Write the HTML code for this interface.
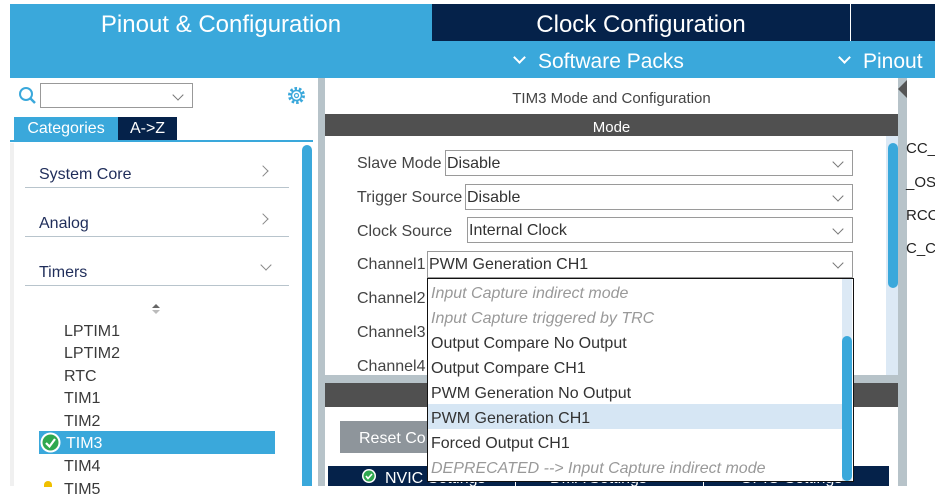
<!DOCTYPE html>
<html><head><style>
*{margin:0;padding:0;box-sizing:border-box}
body{width:935px;height:486px;overflow:hidden;background:#fff;font-family:"Liberation Sans",sans-serif;position:relative;color:#3a3a3a}
.a{position:absolute}
.t{position:absolute;white-space:nowrap}
.sel{position:absolute;border:1px solid #9a9a9a;background:#fff;height:26px;font-size:16px;line-height:26px;padding-left:1px;color:#333}
.sel:after{content:"";position:absolute;right:10px;top:7px;width:7px;height:7px;border-right:1px solid #777;border-bottom:1px solid #777;transform:rotate(45deg)}
.lbl{position:absolute;font-size:16px;color:#444;white-space:nowrap}
.it{position:absolute;left:64px;font-size:16px;color:#3a3a3a}
.dd{position:absolute;left:3px;font-size:16px;white-space:nowrap}
.chev{position:absolute;width:9px;height:9px;border-right:2px solid #fff;border-bottom:2px solid #fff;transform:rotate(45deg)}
.rt{position:absolute;width:8px;height:8px;border-right:1px solid #888;border-bottom:1px solid #888;transform:rotate(-45deg)}
</style></head><body>
<div class="a" style="left:10px;top:4px;width:422px;height:37px;background:#3aa8db"></div>
<div class="t" style="left:10px;top:11px;width:422px;text-align:center;color:#fff;font-size:24px">Pinout &amp; Configuration</div>
<div class="a" style="left:432px;top:4px;width:418px;height:37px;background:#05224a"></div>
<div class="t" style="left:432px;top:11px;width:418px;text-align:center;color:#fff;font-size:24px">Clock Configuration</div>
<div class="a" style="left:850px;top:4px;width:85px;height:37px;background:#05224a;border-left:1px solid #fff"></div>
<div class="a" style="left:10px;top:41px;width:925px;height:37px;background:#3aa8db"></div>
<div class="chev" style="left:515px;top:53px"></div>
<div class="t" style="left:538px;top:50px;color:#fff;font-size:21px">Software Packs</div>
<div class="chev" style="left:840px;top:53px"></div>
<div class="t" style="left:863px;top:50px;color:#fff;font-size:21px">Pinout</div>
<svg class="a" style="left:18px;top:86px" width="20" height="20"><circle cx="8" cy="8" r="6" fill="none" stroke="#3aa8db" stroke-width="2"/><line x1="12" y1="12" x2="17" y2="17" stroke="#3aa8db" stroke-width="2.5"/></svg>
<div class="sel" style="left:40px;top:83px;width:153px;height:25px;border-color:#999"></div>
<svg class="a" style="left:286px;top:85px" width="21" height="21"><circle cx="10.5" cy="10.5" r="7" fill="none" stroke="#3aa8db" stroke-width="3" stroke-dasharray="2.5 1.9"/><circle cx="10.5" cy="10.5" r="5" fill="none" stroke="#3aa8db" stroke-width="1.5"/><circle cx="10.5" cy="10.5" r="2" fill="none" stroke="#3aa8db" stroke-width="1.2"/></svg>
<div class="a" style="left:14px;top:117px;width:104px;height:23px;background:#3aa8db"></div>
<div class="t" style="left:14px;top:120px;width:104px;text-align:center;color:#fff;font-size:16px">Categories</div>
<div class="a" style="left:118px;top:117px;width:59px;height:23px;background:#05224a"></div>
<div class="t" style="left:118px;top:120px;width:59px;text-align:center;color:#fff;font-size:16px">A-&gt;Z</div>
<div class="a" style="left:10px;top:140px;width:303px;height:2px;background:#3aa8db"></div>
<div class="a" style="left:10px;top:143px;width:4px;height:343px;background:#f0f0f0"></div>
<div class="a" style="left:302px;top:145px;width:10px;height:341px;background:#3aa8db;border-radius:5px 5px 0 0"></div>
<div class="t" style="left:39px;top:166px;font-size:16px;color:#1f2d5a">System Core</div>
<div class="rt" style="left:259px;top:167px"></div>
<div class="a" style="left:25px;top:187px;width:264px;height:1px;background:#b8c4cc"></div>
<div class="t" style="left:39px;top:215px;font-size:16px;color:#1f2d5a">Analog</div>
<div class="rt" style="left:259px;top:215px"></div>
<div class="a" style="left:25px;top:236px;width:264px;height:1px;background:#b8c4cc"></div>
<div class="t" style="left:39px;top:264px;font-size:16px;color:#1f2d5a">Timers</div>
<div class="a" style="left:262px;top:261px;width:8px;height:8px;border-right:1px solid #888;border-bottom:1px solid #888;transform:rotate(45deg)"></div>
<div class="a" style="left:25px;top:285px;width:264px;height:1px;background:#b8c4cc"></div>
<svg class="a" style="left:150px;top:302px" width="12" height="14"><path d="M2 6 L6 2 L10 6Z" fill="#666"/><path d="M2 8 L6 12 L10 8Z" fill="#bbb"/></svg>
<div class="it" style="top:323px">LPTIM1</div>
<div class="it" style="top:345px">LPTIM2</div>
<div class="it" style="top:368px">RTC</div>
<div class="it" style="top:390px">TIM1</div>
<div class="it" style="top:413px">TIM2</div>
<div class="a" style="left:39px;top:431px;width:236px;height:23px;background:#3aa8db"></div>
<svg class="a" style="left:40px;top:432px" width="21" height="21"><circle cx="10.5" cy="10.5" r="10" fill="#fff"/><circle cx="10.5" cy="10.5" r="8" fill="#2fa84f"/><path d="M6 11 L9.5 14.5 L15 7" stroke="#fff" stroke-width="2.2" fill="none"/></svg>
<div class="it" style="top:435px;left:66px;color:#fff">TIM3</div>
<div class="it" style="top:458px">TIM4</div>
<div class="it" style="top:481px">TIM5</div>
<div class="a" style="left:44px;top:481px;width:8px;height:6px;background:#f0c000;border-radius:4px 4px 0 0"></div>
<div class="a" style="left:318px;top:78px;width:7px;height:408px;background:#b7c3c9"></div>
<div class="t" style="left:325px;top:90px;width:573px;text-align:center;font-size:15px;color:#444">TIM3 Mode and Configuration</div>
<div class="a" style="left:325px;top:114px;width:573px;height:22px;background:#505050"></div>
<div class="t" style="left:325px;top:119px;width:573px;text-align:center;font-size:15px;color:#fff">Mode</div>
<div class="a" style="left:886px;top:136px;width:12px;height:239px;background:#dce9f5"></div>
<div class="a" style="left:888px;top:143px;width:10px;height:145px;background:#3aa8db;border-radius:5px"></div>
<div class="lbl" style="left:357px;top:155px">Slave Mode</div>
<div class="sel" style="left:445px;top:150px;width:408px">Disable</div>
<div class="lbl" style="left:357px;top:189px">Trigger Source</div>
<div class="sel" style="left:465px;top:184px;width:388px">Disable</div>
<div class="lbl" style="left:357px;top:223px">Clock Source</div>
<div class="sel" style="left:467px;top:217px;width:386px">Internal Clock</div>
<div class="lbl" style="left:357px;top:256px">Channel1</div>
<div class="sel" style="left:427px;top:251px;width:426px;height:27px">PWM Generation CH1</div>
<div class="lbl" style="left:357px;top:290px">Channel2</div>
<div class="lbl" style="left:357px;top:324px">Channel3</div>
<div class="lbl" style="left:357px;top:358px">Channel4</div>
<div class="a" style="left:325px;top:375px;width:573px;height:8px;background:#b7c3c9"></div>
<div class="a" style="left:325px;top:383px;width:573px;height:24px;background:#505050"></div>
<div class="a" style="left:340px;top:421px;width:100px;height:32px;background:#8e959b"></div>
<div class="t" style="left:359px;top:430px;font-size:16px;color:#fff">Reset Co</div>
<div class="a" style="left:328px;top:466px;width:561px;height:20px;background:#05224a"></div>
<svg class="a" style="left:362px;top:469px" width="14" height="14"><circle cx="7" cy="7" r="7" fill="#fff"/><circle cx="7" cy="7" r="5.5" fill="#2fa84f"/><path d="M4 7 L6 9.5 L10 5" stroke="#fff" stroke-width="1.6" fill="none"/></svg>
<div class="t" style="left:385px;top:470px;font-size:16px;color:#fff">NVIC Settings</div>
<div class="a" style="left:515px;top:466px;width:1px;height:20px;background:#fff"></div>
<div class="t" style="left:550px;top:470px;font-size:16px;color:#fff">DMA Settings</div>
<div class="a" style="left:703px;top:466px;width:1px;height:20px;background:#fff"></div>
<div class="t" style="left:740px;top:470px;font-size:16px;color:#fff">GPIO Settings</div>
<div class="a" style="left:898px;top:78px;width:9px;height:408px;background:#b7c3c9"></div>
<div class="a" style="left:898px;top:80px;width:9px;height:30px;background:#555;clip-path:polygon(100% 0,0 30%,100% 60%)"></div>
<div class="t" style="left:906px;top:140px;font-size:15px;color:#222">CC_C</div>
<div class="t" style="left:906px;top:174px;font-size:15px;color:#222">_OS</div>
<div class="t" style="left:906px;top:207px;font-size:15px;color:#222">RCC</div>
<div class="t" style="left:906px;top:240px;font-size:15px;color:#222">C_C</div>
<div class="a" style="left:427px;top:278px;width:427px;height:204px;background:#fff;border:1px solid #111;overflow:hidden">
 <div class="a" style="left:414px;top:0;width:10px;height:202px;background:#dce9f5"></div>
 <div class="a" style="left:414px;top:57px;width:10px;height:145px;background:#3aa8db;border-radius:5px"></div>
 <div class="a" style="left:0;top:125px;width:414px;height:25px;background:#d6e6f4"></div>
 <div class="dd" style="top:6px;color:#999;font-style:italic">Input Capture indirect mode</div>
 <div class="dd" style="top:31px;color:#999;font-style:italic">Input Capture triggered by TRC</div>
 <div class="dd" style="top:56px;color:#333">Output Compare No Output</div>
 <div class="dd" style="top:81px;color:#333">Output Compare CH1</div>
 <div class="dd" style="top:106px;color:#333">PWM Generation No Output</div>
 <div class="dd" style="top:131px;color:#333">PWM Generation CH1</div>
 <div class="dd" style="top:156px;color:#333">Forced Output CH1</div>
 <div class="dd" style="top:181px;color:#999;font-style:italic">DEPRECATED --&gt; Input Capture indirect mode</div>
</div>
</body></html>
